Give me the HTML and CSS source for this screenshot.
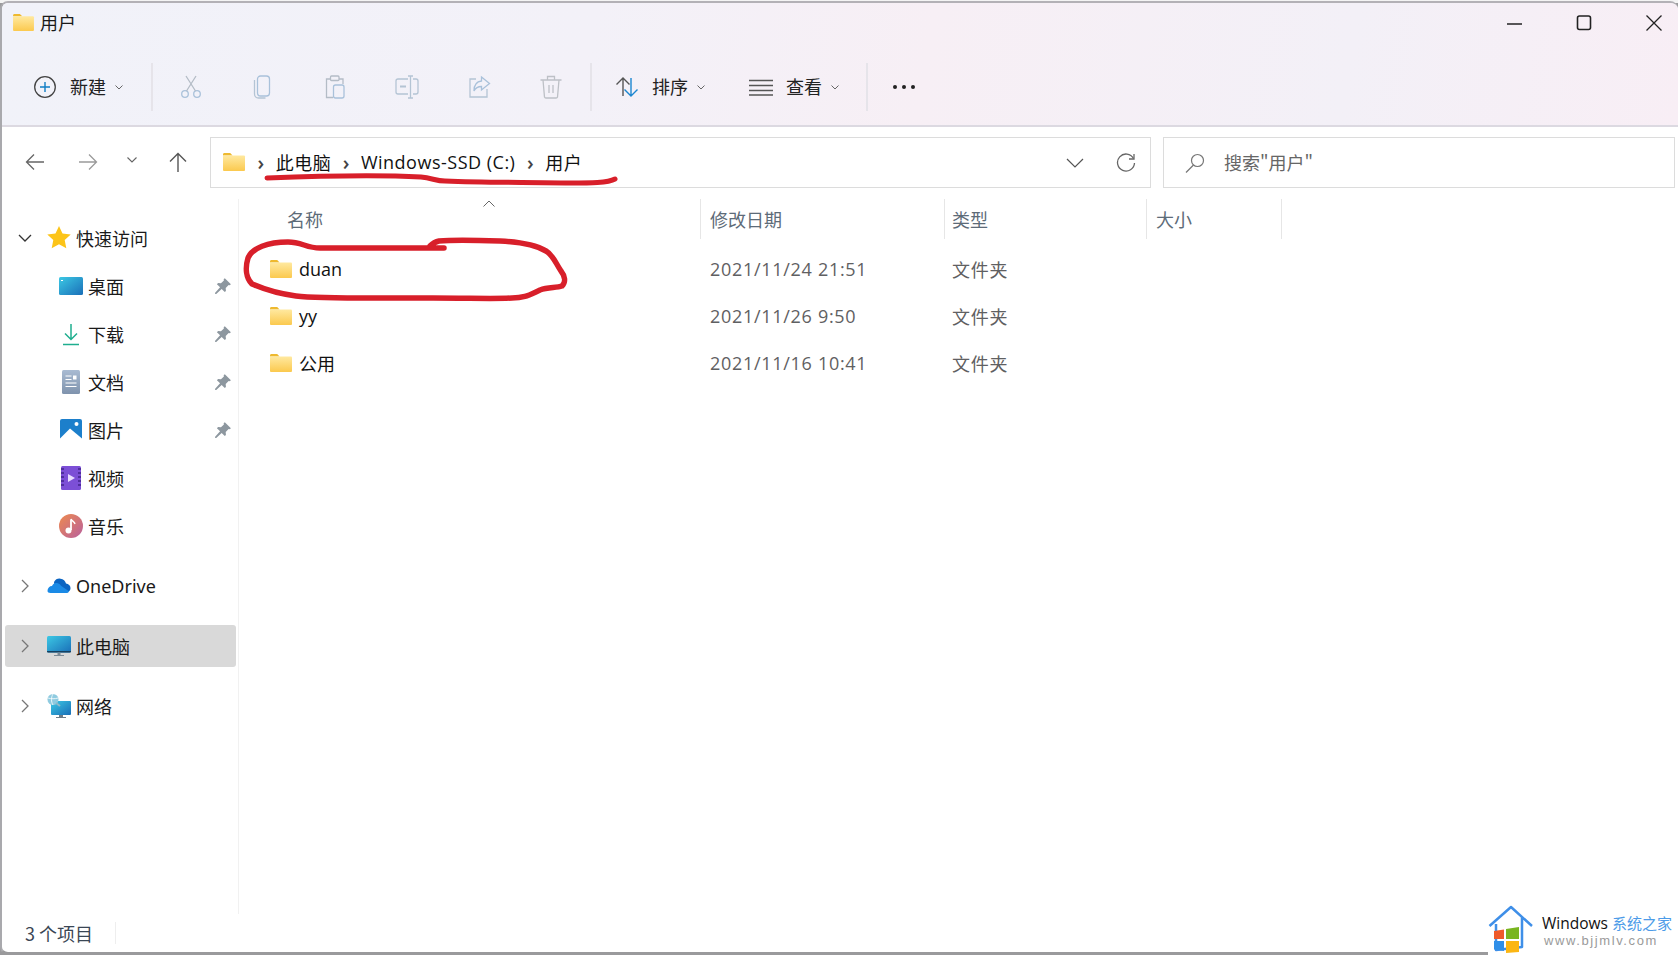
FILE: index.html
```html
<!DOCTYPE html>
<html lang="zh-CN">
<head>
  <meta charset="UTF-8">
  <title>用户</title>
  <meta name="viewport" content="width=device-width, initial-scale=1.0">
  <link rel="stylesheet" href="styles.css">
</head>
<body>

  <svg class="defs" width="0" height="0">
    <defs>
      <linearGradient id="gFolder" x1="0" y1="0" x2="0" y2="1">
        <stop offset="0" stop-color="#ffe9a0"/>
        <stop offset="1" stop-color="#fbc94e"/>
      </linearGradient>
      <linearGradient id="gBlue" x1="0" y1="0" x2="1" y2="1">
        <stop offset="0" stop-color="#3cc8e4"/>
        <stop offset="1" stop-color="#1a6fb8"/>
      </linearGradient>
      <linearGradient id="gDoc" x1="0" y1="0" x2="0" y2="1">
        <stop offset="0" stop-color="#a9bbd2"/>
        <stop offset="1" stop-color="#7f93ad"/>
      </linearGradient>
      <linearGradient id="gMusic" x1="0" y1="0" x2="1" y2="1">
        <stop offset="0" stop-color="#ee8a4e"/>
        <stop offset="1" stop-color="#b8609e"/>
      </linearGradient>
      <symbol id="folder" viewBox="0 0 24 20">
        <path d="M1 2.500C1 1.700 1.600 1 2.400 1h5.800l2.400 2.400H1z" fill="#eeb92f"/>
        <rect x="1" y="3.400" width="22" height="15.600" rx="1" fill="url(#gFolder)"/>
      </symbol>
      <symbol id="pin" viewBox="0 0 16 16">
        <path d="M9.600 1l5.400 5.400-1 1-1-.2-2.600 2.600.2 2.600-1 1-2.800-2.800L2 15l-1 0 0-1 4.400-4.800L2.600 6.400l1-1 2.600.2 2.600-2.600-.2-1z" fill="#8d979f"/>
      </symbol>
    </defs>
  </svg>

  <div class="window">

    <div class="ribbon">
      <div class="titlebar">
        <svg class="title-icon"><use href="#folder"/></svg>
        <span class="title-text">用户</span>
        <div class="win-btns">
          <svg class="win-btn" viewBox="0 0 24 24"><path d="M5 13h15" stroke="#222" stroke-width="1.300"/></svg>
          <svg class="win-btn" viewBox="0 0 24 24"><rect x="5.500" y="5" width="13" height="13.500" rx="2" fill="none" stroke="#222" stroke-width="1.600"/></svg>
          <svg class="win-btn" viewBox="0 0 24 24"><path d="M4.500 4.500l15 15M19.500 4.500l-15 15" stroke="#222" stroke-width="1.300"/></svg>
        </div>
      </div>

      <div class="toolbar">
        <div class="tool tool-new">
          <svg class="tool-icon" viewBox="0 0 24 24">
            <circle cx="12" cy="12" r="10.300" fill="none" stroke="#444" stroke-width="1.300"/>
            <path d="M12 7v10M7 12h10" stroke="#0f7dc4" stroke-width="1.400"/>
          </svg>
          <span class="tool-label">新建</span>
          <svg class="tool-caret" viewBox="0 0 8 5"><path d="M.5.500L4 4 7.500.5" fill="none" stroke="#666"/></svg>
        </div>
        <div class="tool-sep"></div>
        <div class="tool-group">
          <div class="tool-slot">
            <svg class="tool-icon" viewBox="0 0 24 24" fill="none" stroke="#a9c1da" stroke-width="1.300">
              <circle cx="6" cy="19" r="3.300"/><circle cx="18" cy="19" r="3.300"/>
              <path d="M7.500 16L17 1M16.500 16L7 1" stroke="#b4bcc6"/>
            </svg>
          </div>
          <div class="tool-slot">
            <svg class="tool-icon" viewBox="0 0 24 24" fill="none" stroke="#a9c1da" stroke-width="1.300">
              <rect x="6.500" y="1" width="12" height="20" rx="3"/>
              <path d="M3.500 5v14c0 2 1.500 4 4 4h7" stroke="#b4c4d4"/>
            </svg>
          </div>
          <div class="tool-slot">
            <svg class="tool-icon" viewBox="0 0 24 24" fill="none" stroke="#b4bcc6" stroke-width="1.300">
              <path d="M7 4H3.500v18.500H10"/><path d="M16 4h4v5"/><rect x="7.500" y="1" width="8.500" height="4.500" rx="1"/>
              <rect x="10.500" y="10" width="10.500" height="13" rx="2" stroke="#a9c1da"/>
            </svg>
          </div>
          <div class="tool-slot">
            <svg class="tool-icon" viewBox="0 0 24 24" fill="none" stroke="#b4c4d4" stroke-width="1.300">
              <path d="M13 4H3a2 2 0 0 0-2 2v11a2 2 0 0 0 2 2h10M18 4h3a2 2 0 0 1 2 2v11a2 2 0 0 1-2 2h-3"/>
              <path d="M15.500 1v22M13 1h5M13 23h5"/><path d="M5 11.500h6" stroke-width="2"/>
            </svg>
          </div>
          <div class="tool-slot">
            <svg class="tool-icon" viewBox="0 0 24 24" fill="none" stroke="#b4c4d4" stroke-width="1.300">
              <path d="M9 4H3v18h17v-8"/>
              <path d="M14.500 2l8 6.500-8 6.500v-3.500c-4 0-6 1.500-7.500 4.500 0-6 3-9.500 7.500-10z" stroke="#a9c1da"/>
            </svg>
          </div>
          <div class="tool-slot">
            <svg class="tool-icon" viewBox="0 0 24 24" fill="none" stroke="#bdc0c6" stroke-width="1.300">
              <path d="M1.500 5h21M8.500 5V1.500h7V5M4 5l1.500 17a1.500 1.500 0 0 0 1.500 1h10a1.500 1.500 0 0 0 1.500-1L20 5M10 10v8M14 10v8"/>
            </svg>
          </div>
        </div>
        <div class="tool-sep"></div>
        <div class="tool tool-sort">
          <svg class="tool-icon" viewBox="0 0 24 24" fill="none" stroke-width="1.400">
            <path d="M8 21V3M1.500 9.500L8 3l6.500 6.500" stroke="#555"/>
            <path d="M16 3v18M9.500 14.500L16 21l6.500-6.500" stroke="#1b86d0"/>
          </svg>
          <span class="tool-label">排序</span>
          <svg class="tool-caret" viewBox="0 0 8 5"><path d="M.5.500L4 4 7.500.5" fill="none" stroke="#666"/></svg>
        </div>
        <div class="tool tool-view">
          <svg class="tool-icon" viewBox="0 0 24 24" fill="none" stroke="#555" stroke-width="1.400">
            <path d="M0 5.500h24M0 10.500h24M0 15.500h24M0 20h24"/>
          </svg>
          <span class="tool-label">查看</span>
          <svg class="tool-caret" viewBox="0 0 8 5"><path d="M.5.500L4 4 7.500.5" fill="none" stroke="#666"/></svg>
        </div>
        <div class="tool-sep"></div>
        <div class="more"><i></i><i></i><i></i></div>
      </div>
    </div>

    <div class="addressrow">
      <svg class="nav-arrow nav-back" viewBox="0 0 20 20" fill="none" stroke="#666" stroke-width="1.300"><path d="M19 10H1.500M9 2.500L1.500 10 9 17.500"/></svg>
      <svg class="nav-arrow nav-forward" viewBox="0 0 20 20" fill="none" stroke="#9a9a9a" stroke-width="1.300"><path d="M1 10h17.500M11 2.500l7.500 7.500-7.500 7.500"/></svg>
      <svg class="nav-down" viewBox="0 0 10 6" fill="none" stroke="#666" stroke-width="1.100"><path d="M.5.500L5 5 9.500.5"/></svg>
      <svg class="nav-arrow nav-up" viewBox="0 0 20 20" fill="none" stroke="#555" stroke-width="1.400"><path d="M10 20V1.500M2 9.500l8-8 8 8"/></svg>

      <div class="address">
        <svg class="addr-folder"><use href="#folder"/></svg>
        <span class="crumb-sep">›</span>
        <span class="crumb">此电脑</span>
        <span class="crumb-sep">›</span>
        <span class="crumb">Windows-SSD (C:)</span>
        <span class="crumb-sep">›</span>
        <span class="crumb">用户</span>
        <svg class="addr-down" viewBox="0 0 18 10" fill="none" stroke="#555" stroke-width="1.200"><path d="M1 1l8 8 8-8"/></svg>
        <svg class="addr-refresh" viewBox="0 0 20 20" fill="none" stroke="#666" stroke-width="1.300"><path d="M17.500 5.500A8.500 8.500 0 1 0 18.500 10"/><path d="M18 1v5h-5"/></svg>
      </div>

      <div class="search">
        <svg class="search-icon" viewBox="0 0 20 20" fill="none" stroke="#777" stroke-width="1.200"><circle cx="12.500" cy="7.500" r="6"/><path d="M8.500 12L1 19.500"/></svg>
        <span class="search-text">搜索"用户"</span>
      </div>
    </div>

    <div class="main">
      <div class="sidebar">
        <div class="nav-row">
          <svg class="nav-caret" viewBox="0 0 14 8" fill="none" stroke="#333" stroke-width="1.300"><path d="M1 1l6 6 6-6"/></svg>
          <svg class="nav-icon" viewBox="0 0 24 24"><path d="M12 0l3.500 7.500 8.200 1-6 5.500 1.600 8.200L12 18.200l-7.300 4L6.300 14l-6-5.500 8.200-1z" fill="#fcc419"/></svg>
          <span class="nav-text">快速访问</span>
        </div>
        <div class="nav-row nav-sub">
          <svg class="nav-icon" viewBox="0 0 24 24"><rect y="3" width="24" height="18" rx="1.500" fill="url(#gBlue)"/><path d="M2 6h2v1H2z" fill="#fff"/></svg>
          <span class="nav-text">桌面</span>
          <svg class="pin"><use href="#pin"/></svg>
        </div>
        <div class="nav-row nav-sub">
          <svg class="nav-icon" viewBox="0 0 24 24" fill="none" stroke="#1fae8f" stroke-width="1.500"><path d="M12 2v15M6 11.500l6 6 6-6M4 22.500h16"/></svg>
          <span class="nav-text">下载</span>
          <svg class="pin"><use href="#pin"/></svg>
        </div>
        <div class="nav-row nav-sub">
          <svg class="nav-icon" viewBox="0 0 24 24"><rect x="3" y="0" width="18" height="24" rx="1.500" fill="url(#gDoc)"/><path d="M6.500 6h6M6.500 9.500h6M6.500 13h11M6.500 16.500h11" stroke="#fff" stroke-width="1"/><rect x="14" y="5.500" width="3.500" height="4" fill="#fff"/></svg>
          <span class="nav-text">文档</span>
          <svg class="pin"><use href="#pin"/></svg>
        </div>
        <div class="nav-row nav-sub">
          <svg class="nav-icon" viewBox="0 0 24 24"><rect x="1" y="1" width="22" height="22" rx="2" fill="#1c7fcb"/><path d="M1 20.500L11 10.500l12 10V23H1z" fill="#fff"/><circle cx="17.500" cy="6" r="2" fill="#fff"/></svg>
          <span class="nav-text">图片</span>
          <svg class="pin"><use href="#pin"/></svg>
        </div>
        <div class="nav-row nav-sub">
          <svg class="nav-icon" viewBox="0 0 24 24"><rect x="2" y="0" width="20" height="24" rx="1.500" fill="#7c4fd6"/><path d="M2 3h20M2 7h20M2 11h20M2 15h20M2 19h20" stroke="#41258c" stroke-width="1.500" stroke-dasharray="3 14"/><path d="M9 8l7 4-7 4z" fill="#e8dcff"/></svg>
          <span class="nav-text">视频</span>
        </div>
        <div class="nav-row nav-sub">
          <svg class="nav-icon" viewBox="0 0 24 24"><circle cx="12" cy="12" r="12" fill="url(#gMusic)"/><path d="M12 5.500v10.500" stroke="#fff" stroke-width="1.800"/><path d="M12 5c1 2.500 3.500 2.500 4 5" stroke="#fff" stroke-width="1.500" fill="none"/><circle cx="9.500" cy="16.500" r="3" fill="#fff"/></svg>
          <span class="nav-text">音乐</span>
        </div>

        <div class="nav-row nav-group">
          <svg class="nav-caret nav-caret-right" viewBox="0 0 8 14" fill="none" stroke="#777" stroke-width="1.300"><path d="M1 1l6 6-6 6"/></svg>
          <svg class="nav-icon" viewBox="0 0 24 24"><path d="M7 8a6.500 6.500 0 0 1 12 1.500c2.500.3 4.500 2.200 4.500 4.500 0 1.200-.4 2.300-1.200 3H8z" fill="#0a64c2"/><path d="M.5 17c0-3 2-5 4.500-5 .6-2 2.500-3.500 5-3 2 .3 3 1.500 4 2.800l8.300 5.700c-.6.800-1.500 1.500-3 1.500H3.500C1.700 19 .5 18.200.5 17z" fill="#1a8ae6"/></svg>
          <span class="nav-text">OneDrive</span>
        </div>
        <div class="nav-row nav-group nav-active">
          <svg class="nav-caret nav-caret-right" viewBox="0 0 8 14" fill="none" stroke="#777" stroke-width="1.300"><path d="M1 1l6 6-6 6"/></svg>
          <svg class="nav-icon" viewBox="0 0 24 24"><rect y="2" width="24" height="16.500" rx="1.500" fill="url(#gBlue)"/><path d="M0 17h24v.5a1 1 0 0 1-1 1H1a1 1 0 0 1-1-1z" fill="#16405f"/><path d="M10.500 18.500h3v2.500h-3zM7 21h10v1H7z" fill="#7b8a96"/></svg>
          <span class="nav-text">此电脑</span>
        </div>
        <div class="nav-row nav-group">
          <svg class="nav-caret nav-caret-right" viewBox="0 0 8 14" fill="none" stroke="#777" stroke-width="1.300"><path d="M1 1l6 6-6 6"/></svg>
          <svg class="nav-icon" viewBox="0 0 24 24"><rect x="4" y="7" width="20" height="14" rx="1" fill="url(#gBlue)"/><path d="M12 21h4v2h-4zM9 23h10v1H9z" fill="#6d7c88"/><circle cx="6" cy="5.500" r="5.500" fill="#8fcbe0"/><path d="M1 4c3 1 7 1 10 0M6 0c-2 3-2 8 0 11" stroke="#fff" stroke-width=".8" fill="none"/><path d="M9 9l4 3" stroke="#8fb8c8" stroke-width="2"/></svg>
          <span class="nav-text">网络</span>
        </div>
      </div>

      <div class="content">
        <div class="col-head">
          <div class="col col-name">名称</div>
          <div class="col">修改日期</div>
          <div class="col col-type">类型</div>
          <div class="col">大小</div>
          <svg class="sort-caret" viewBox="0 0 12 7" fill="none" stroke="#666" stroke-width="1"><path d="M.5 6.500L6 1l5.500 5.500"/></svg>
        </div>
        <div class="file-row">
          <div class="file-name"><svg class="file-icon"><use href="#folder"/></svg>duan</div>
          <div class="file-meta">2021/11/24 21:51</div>
          <div class="file-type">文件夹</div>
        </div>
        <div class="file-row">
          <div class="file-name"><svg class="file-icon"><use href="#folder"/></svg>yy</div>
          <div class="file-meta">2021/11/26 9:50</div>
          <div class="file-type">文件夹</div>
        </div>
        <div class="file-row">
          <div class="file-name"><svg class="file-icon"><use href="#folder"/></svg>公用</div>
          <div class="file-meta">2021/11/16 10:41</div>
          <div class="file-type">文件夹</div>
        </div>
      </div>
    </div>

    <div class="statusbar"><span class="status-text">3 个项目</span></div>
  </div>

  <!-- red pen marks drawn over the screenshot -->
  <svg class="marks" viewBox="0 0 1678 955" fill="none" stroke="#d81f2a" stroke-linecap="round" stroke-linejoin="round">
    <path stroke-width="5" d="M267 178C320 176 380 175 421 177C432 178 436 181 445 181C490 183 530 182 570 183C590 183 608 183 615 179"/>
    <path stroke-width="5.500" d="M444 248L320 248C306 248 302 242 288 242C268 242 252 248 248 258C245 268 246 278 252 284C268 291 280 294 296 296C320 299 360 298 433 298C470 298 495 299 512 298C525 298 529 295 540 290C548 287 556 288 562 286C566 282 565 276 561 271C555 262 553 255 546 251C536 245 522 242 500 241C470 240 450 240 439 241C434 242 432 244 430 246"/>
  </svg>

  <div class="watermark">
    <svg class="wm-logo" viewBox="0 0 46 48">
      <path d="M1.500 21L23 2l21 19M8 19v26l26-3V12" fill="none" stroke="#3f8fe8" stroke-width="2.500" stroke-linejoin="round"/>
      <path d="M6 26l10-1.500v9.500H6z" fill="#ee5a2a"/>
      <path d="M18 24l13-2v12H18z" fill="#79b51f"/>
      <path d="M6 36h10v10L6 44.500z" fill="#2f8fe8"/>
      <path d="M18 36h13v11l-13 1z" fill="#fbb613"/>
    </svg>
    <div class="wm-text">
      <div class="wm-title">Windows <span class="wm-blue">系统之家</span></div>
      <div class="wm-url">www.bjjmlv.com</div>
    </div>
  </div>

</body>
</html>
```

FILE: styles.css
```css
body {
  margin: 0;
  height: 955px;
  overflow: hidden;
  position: relative;
  background: linear-gradient(#f4f4f4 3px, #9a9a9c 3px);
  font-family: "Open Sans", "Noto Sans CJK SC", sans-serif;
  font-size: 18px;
  color: #1a1a1a;
}

.defs {
  position: absolute;
}

.window {
  height: 949px;
  margin-top: 1px;
  border-top: 2px solid #b3b1b6;
  border-left: 2px solid #a9a9ad;
  border-bottom: 3px solid #9a9a9c;
  border-radius: 8px;
  background: #fff;
  display: flex;
  flex-direction: column;
  overflow: hidden;
}

.ribbon {
  background: linear-gradient(100deg, #f1f2f9 0%, #f3f1f8 35%, #f7eff5 55%, #f3f0f7 80%, #f8eef5 100%);
  border-bottom: 2px solid #dcd9e1;
  height: 122px;
  flex: none;
}

.titlebar {
  height: 38px;
  margin-bottom: 8px;
  display: flex;
  align-items: center;
  padding-left: 10px;
  padding-right: 12px;
}

.title-icon {
  width: 23px;
  height: 19px;
}

.title-text {
  margin-left: 5px;
  font-family: "Noto Sans CJK SC", sans-serif;
  font-size: 18px;
}

.win-btns {
  margin-left: auto;
  margin-top: 1px;
  display: flex;
  gap: 46px;
}

.win-btn {
  width: 24px;
  height: 24px;
}

.toolbar {
  height: 76px;
  display: flex;
  align-items: center;
}

.tool {
  display: flex;
  align-items: center;
}

.tool-icon {
  width: 24px;
  height: 24px;
  flex: none;
}

.tool-label {
  font-family: "Noto Sans CJK SC", sans-serif;
  margin-left: 13px;
  margin-top: -2px;
  color: #222;
}

.tool-caret {
  width: 8px;
  height: 5px;
  margin-left: 9px;
}

.tool-new {
  margin-left: 31px;
  width: 118px;
}

.tool-sep {
  width: 2px;
  height: 48px;
  background: #e6e4ea;
  flex: none;
}

.tool-group {
  display: flex;
  width: 437px;
}

.tool-slot {
  width: 72px;
  display: flex;
  justify-content: center;
}

.tool-group .tool-slot:first-child {
  margin-left: 2px;
}

.tool-sort {
  margin-left: 23px;
  width: 134px;
}

.tool-view {
  width: 117px;
}

.more {
  display: flex;
  gap: 5px;
  margin-left: 25px;
}

.more i {
  width: 4px;
  height: 4px;
  border-radius: 50%;
  background: #222;
}

.addressrow {
  height: 72px;
  display: flex;
  align-items: flex-start;
  padding-top: 10px;
  box-sizing: border-box;
  flex: none;
}

.nav-arrow {
  width: 20px;
  height: 20px;
  margin-top: 15px;
  flex: none;
}

.nav-back {
  margin-left: 23px;
}

.nav-forward {
  margin-left: 33px;
}

.nav-down {
  width: 10px;
  height: 6px;
  margin-top: 20px;
  margin-left: 29px;
  flex: none;
}

.nav-up {
  margin-left: 31px;
}

.address {
  margin-left: 22px;
  width: 941px;
  height: 51px;
  box-sizing: border-box;
  border: 1px solid #dcdcdc;
  display: flex;
  align-items: center;
  padding-left: 11px;
  flex: none;
}

.addr-folder {
  width: 24px;
  height: 20px;
  margin-top: -2px;
}

.crumb-sep {
  margin: 0 11.500px;
  color: #444;
  font-size: 20px;
  font-weight: 600;
  line-height: 1;
}

.crumb {
  letter-spacing: .5px;
  margin-top: -2px;
  color: #111;
}

.addr-down {
  width: 18px;
  height: 10px;
  margin-left: auto;
}

.addr-refresh {
  width: 20px;
  height: 20px;
  margin-left: 32px;
  margin-right: 14px;
}

.search {
  margin-left: 12px;
  width: 512px;
  height: 51px;
  box-sizing: border-box;
  border: 1px solid #dcdcdc;
  display: flex;
  align-items: center;
  padding-left: 21px;
  flex: none;
}

.search-icon {
  width: 20px;
  height: 20px;
}

.search-text {
  margin-left: 19px;
  margin-top: -2px;
  font-family: "Noto Sans CJK SC", sans-serif;
  color: #666;
}

.main {
  flex: 1;
  display: flex;
  min-height: 0;
}

.sidebar {
  width: 231px;
  padding: 18px 2px 0 3px;
  border-right: 1px solid #f1f1f1;
  flex: none;
}

.nav-row {
  height: 42px;
  margin-bottom: 6px;
  display: flex;
  align-items: center;
  border-radius: 3px;
  font-family: "Noto Sans", "Noto Sans CJK SC", sans-serif;
}

.nav-text {
  margin-left: 3px;
  color: #1a1a1a;
}

.nav-caret {
  width: 14px;
  height: 8px;
  margin-left: 13px;
  margin-right: 13px;
  flex: none;
}

.nav-caret-right {
  width: 8px;
  height: 14px;
  margin-left: 16px;
  margin-right: 16px;
}

.nav-icon {
  width: 24px;
  height: 24px;
  margin: 0 2px;
  flex: none;
}

.nav-sub {
  padding-left: 52px;
}

.nav-group {
  margin-top: 18px;
  margin-bottom: 0;
}

.nav-active {
  background: #d9d9d9;
}

.pin {
  width: 18px;
  height: 18px;
  margin-left: auto;
  margin-right: 4px;
}

.content {
  flex: 1;
  min-width: 0;
}

.col-head {
  display: grid;
  grid-template-columns: 462px 244px 202px 135px;
  height: 40px;
  position: relative;
  margin-bottom: 6px;
}

.col {
  border-right: 1px solid #e6e6e6;
  padding-left: 9px;
  line-height: 40px;
  color: #5d6b78;
  font-family: "Noto Sans CJK SC", sans-serif;
}

.col-name {
  padding-left: 48px;
}

.col-type {
  padding-left: 7px;
}

.sort-caret {
  position: absolute;
  left: 244px;
  top: 1px;
  width: 12px;
  height: 7px;
}

.file-row {
  display: grid;
  grid-template-columns: 462px 244px 202px;
  height: 47px;
  align-items: center;
}

.file-name {
  display: flex;
  align-items: center;
  padding-left: 30px;
  color: #111;
}

.file-icon {
  width: 24px;
  height: 20px;
  margin-right: 6px;
}

.file-meta {
  padding-left: 9px;
  color: #5f6062;
  letter-spacing: .7px;
}

.file-type {
  padding-left: 7px;
  color: #5f6062;
  letter-spacing: .7px;
}

.statusbar {
  height: 38px;
  display: flex;
  align-items: center;
  flex: none;
}

.status-text {
  padding: 0 22px 0 23px;
  border-right: 1px solid #eeeeee;
  color: #3a4654;
  line-height: 22px;
  font-family: "Noto Sans CJK SC", sans-serif;
}

.marks {
  position: absolute;
  left: 0;
  top: 0;
  width: 1678px;
  height: 955px;
  pointer-events: none;
}

.watermark {
  position: absolute;
  right: 0;
  bottom: 0;
  width: 190px;
  height: 50px;
  background: #fff;
  display: flex;
  align-items: flex-start;
  border-top-left-radius: 24px;
}

.wm-logo {
  width: 46px;
  height: 48px;
  flex: none;
}

.wm-text {
  margin-left: 8px;
  padding-top: 8px;
  white-space: nowrap;
}

.wm-title {
  font-family: "Open Sans", "Noto Sans CJK SC", sans-serif;
  font-size: 15.500px;
  line-height: 19px;
  color: #111;
}

.wm-blue {
  color: #4c9be8;
  font-family: "Noto Sans CJK SC", sans-serif;
  font-size: 15px;
}

.wm-url {
  font-family: "Liberation Sans", sans-serif;
  font-size: 13px;
  line-height: 15px;
  padding-left: 2px;
  letter-spacing: 1.600px;
  color: #9a9a9a;
}
```
